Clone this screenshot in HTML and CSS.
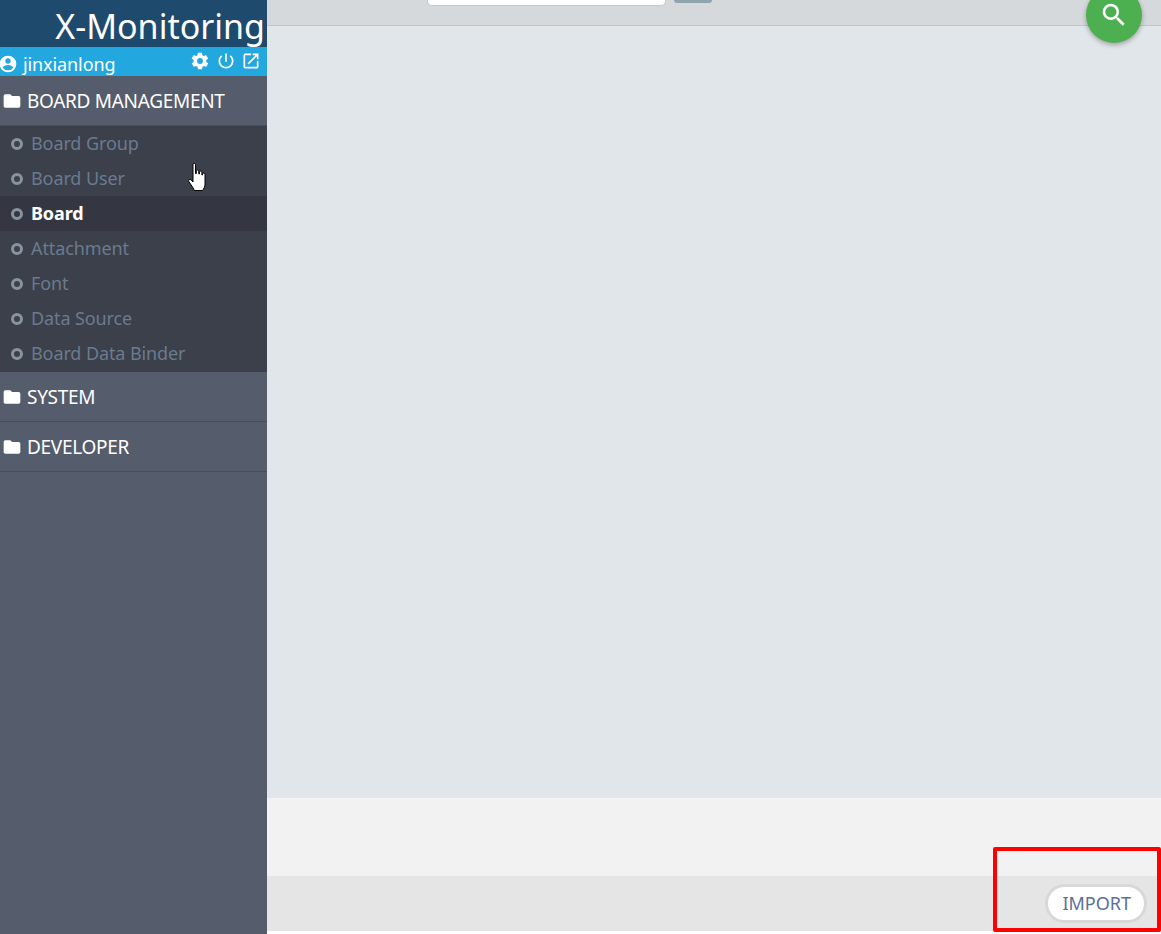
FILE: index.html
```html
<!DOCTYPE html>
<html lang="en">
<head>
<meta charset="UTF-8">
<title>X-Monitoring</title>
<link rel="stylesheet" href="styles.css">
</head>
<body>

<div class="app">
    <aside class="sidebar">
        <div class="logo">X-Monitoring</div>
        <div class="user-bar">
            <svg class="user-icon" viewBox="0 0 24 24"><path d="M12 2a10 10 0 1 0 0 20 10 10 0 0 0 0-20zm0 3.2a3.2 3.2 0 1 1 0 6.4 3.2 3.2 0 0 1 0-6.4zm0 14.4a7.6 7.6 0 0 1-6.2-3.2c.1-2 4.1-3.1 6.2-3.1s6.100 1.100 6.200 3.100a7.600 7.600 0 0 1-6.200 3.200z"/></svg>
            <span class="user-name">jinxianlong</span>
            <div class="user-actions">
                <svg class="action-icon" viewBox="0 0 24 24"><path d="M19.4 13c0-.3.1-.6.1-1s0-.7-.1-1l2.100-1.600c.2-.2.2-.4.1-.6l-2-3.500c-.1-.2-.4-.3-.6-.2l-2.500 1c-.5-.4-1.100-.7-1.700-1l-.4-2.600c0-.2-.2-.4-.5-.4h-4c-.2 0-.5.200-.5.400l-.4 2.600c-.6.300-1.100.6-1.700 1l-2.500-1c-.2-.1-.5 0-.6.200l-2 3.500c-.1.200-.1.500.1.600L4.500 11c0 .3-.1.700-.1 1s0 .7.1 1l-2.100 1.600c-.2.200-.2.400-.1.600l2 3.500c.1.200.4.300.6.200l2.500-1c.5.400 1.100.7 1.700 1l.4 2.600c0 .2.300.4.500.4h4c.3 0 .5-.2.500-.4l.4-2.600c.6-.3 1.200-.6 1.700-1l2.500 1c.2.100.5 0 .6-.2l2-3.500c.1-.2.100-.4-.1-.6L19.400 13zM12 15.500a3.500 3.500 0 1 1 0-7 3.500 3.500 0 0 1 0 7z"/></svg>
                <svg class="action-icon" viewBox="0 0 24 24"><path d="M13 3h-2v10h2V3zm4.800 2.200-1.400 1.400A7 7 0 1 1 7.600 6.600L6.200 5.200a9 9 0 1 0 11.600 0z"/></svg>
                <svg class="action-icon" viewBox="0 0 24 24"><path d="M19 19H5V5h7V3H5a2 2 0 0 0-2 2v14c0 1.100.9 2 2 2h14a2 2 0 0 0 2-2v-7h-2v7zM14 3v2h3.600l-9.800 9.800 1.400 1.400L19 6.400V10h2V3h-7z"/></svg>
            </div>
        </div>

        <div class="group-title">
            <svg class="folder-icon" viewBox="0 0 24 24"><path d="M10 4H4a2 2 0 0 0-2 2v12c0 1.100.9 2 2 2h16a2 2 0 0 0 2-2V8a2 2 0 0 0-2-2h-8l-2-2z"/></svg>
            <span>BOARD MANAGEMENT</span>
        </div>
        <ul class="group-items">
            <li class="group-item"><span class="ring"></span>Board Group</li>
            <li class="group-item"><span class="ring"></span>Board User</li>
            <li class="group-item group-item-active"><span class="ring"></span>Board</li>
            <li class="group-item"><span class="ring"></span>Attachment</li>
            <li class="group-item"><span class="ring"></span>Font</li>
            <li class="group-item"><span class="ring"></span>Data Source</li>
            <li class="group-item"><span class="ring"></span>Board Data Binder</li>
        </ul>
        <div class="group-title">
            <svg class="folder-icon" viewBox="0 0 24 24"><path d="M10 4H4a2 2 0 0 0-2 2v12c0 1.100.9 2 2 2h16a2 2 0 0 0 2-2V8a2 2 0 0 0-2-2h-8l-2-2z"/></svg>
            <span>SYSTEM</span>
        </div>
        <div class="group-title">
            <svg class="folder-icon" viewBox="0 0 24 24"><path d="M10 4H4a2 2 0 0 0-2 2v12c0 1.100.9 2 2 2h16a2 2 0 0 0 2-2V8a2 2 0 0 0-2-2h-8l-2-2z"/></svg>
            <span>DEVELOPER</span>
        </div>
    </aside>

    <main class="main">
        <div class="search-bar">
            <div class="search-input"></div>
            <div class="search-button"></div>
        </div>
        <div class="content"></div>
        <div class="band"></div>
        <div class="footer">
            <button class="import-button">IMPORT</button>
        </div>
        <div class="page-end"></div>
    </main>
</div>

<div class="fab">
    <svg class="fab-icon" viewBox="0 0 24 24"><path d="M15.500 14h-.8l-.3-.3a6.500 6.500 0 1 0-.7.7l.3.300v.8l5 5 1.500-1.500-5-5zm-6 0a4.500 4.500 0 1 1 0-9 4.500 4.500 0 0 1 0 9z"/></svg>
</div>

<svg class="hand-cursor" viewBox="0 0 19 28"><path d="M5 1.500c0-1.500 2.500-1.500 2.500 0v9h.8V8c0-1.200 2.500-1.200 2.500 0v3h.6V9c0-1.200 2.500-1.200 2.500 0v3h.6v-1c0-1.200 2.500-1.200 2.500 0v10c0 2.800-1 4.500-2.500 6.500H6.500L4.500 24 .8 18.500c-.8-1.500 1-2.800 2.200-1.700L5 19z" fill="#fff" stroke="#000" stroke-width="1"/></svg>

<div class="callout"></div>

</body>
</html>
```
FILE: styles.css
```css
html, body {
    height: 100%;
    margin: 0;
    padding: 0;
}

body {
    position: relative;
    overflow: hidden;
    font-family: "Noto Sans", "Open Sans", sans-serif;
    background-color: #fff;
}

.app {
    display: flex;
    height: 934px;
}

.sidebar {
    width: 267px;
    flex-shrink: 0;
    background-color: #555c6b;
    color: #fff;
}

.logo {
    height: 47px;
    padding-top: 6px;
    padding-right: 2px;
    box-sizing: border-box;
    background-color: #1e4a6d;
    font-size: 34px;
    line-height: 41px;
    text-align: right;
    white-space: nowrap;
}

.user-bar {
    display: flex;
    align-items: center;
    height: 29px;
    padding-top: 5px;
    box-sizing: border-box;
    background-color: #22a7df;
}

.user-icon {
    width: 20px;
    height: 20px;
    margin-left: -2px;
    fill: #fff;
}

.user-name {
    margin-left: 5px;
    font-size: 18px;
    letter-spacing: -0.1px;
}

.user-actions {
    display: flex;
    gap: 5px;
    margin-left: auto;
    margin-right: 6px;
    margin-top: -6px;
}

.action-icon {
    width: 20px;
    height: 20px;
    fill: #fff;
}

.action-icon:first-child {
    margin-right: 1px;
    margin-left: -1px;
}

.group-title {
    display: flex;
    align-items: center;
    height: 50px;
    box-sizing: border-box;
    border-bottom: 1px solid #474c5a;
    font-size: 19px;
    letter-spacing: -0.3px;
}

.folder-icon {
    width: 20px;
    height: 20px;
    margin-left: 2px;
    margin-right: 5px;
    fill: #fff;
}

.group-items {
    list-style-type: none;
    margin: 0;
    padding: 0;
    background-color: #3c404b;
    height: 246px;
}

.group-item {
    display: flex;
    align-items: center;
    height: 35px;
    padding-left: 11px;
    padding-bottom: 2px;
    box-sizing: border-box;
    font-size: 18px;
    letter-spacing: -0.1px;
    color: #6a7b8e;
}

.group-item-active {
    background-color: #343741;
    color: #fff;
    font-weight: 700;
}

.ring {
    width: 6px;
    height: 6px;
    margin-top: 2px;
    margin-right: 8px;
    border: 3px solid #87949f;
    border-radius: 50%;
}

.main {
    display: flex;
    flex-direction: column;
    flex: 1;
}

.search-bar {
    display: flex;
    align-items: flex-start;
    height: 26px;
    box-sizing: border-box;
    background-color: #d5d9dc;
    border-bottom: 1px solid #c0c5c8;
}

.search-input {
    width: 237px;
    height: 5px;
    margin-left: 160px;
    background-color: #fff;
    border: 1px solid #c4c8cb;
    border-top: 0;
    border-radius: 0 0 5px 5px;
}

.search-button {
    width: 38px;
    height: 3px;
    margin-left: 8px;
    background-color: #90a4ae;
    border-radius: 0 0 3px 3px;
}

.content {
    height: 772px;
    background-color: #e1e6ea;
}

.band {
    height: 78px;
    background-color: #f2f2f2;
}

.footer {
    display: flex;
    align-items: center;
    justify-content: flex-end;
    height: 55px;
    padding-right: 14px;
    box-sizing: border-box;
    background-color: #e5e5e5;
}

.page-end {
    flex: 1;
    background-color: #fff;
}

.import-button {
    height: 39px;
    padding: 0 13px 2px 14px;
    border: 3px solid #d8d8d8;
    border-radius: 20px;
    background-color: #fff;
    font-family: inherit;
    font-size: 18px;
    color: #5b6f9a;
}

.fab {
    position: absolute;
    top: -13px;
    left: 1086px;
    display: flex;
    align-items: center;
    justify-content: center;
    width: 56px;
    height: 56px;
    border-radius: 50%;
    background-color: #4caf50;
    box-shadow: 0 2px 5px rgba(0, 0, 0, 0.3);
}

.fab-icon {
    width: 30px;
    height: 30px;
    fill: #fff;
}

.hand-cursor {
    position: absolute;
    top: 163px;
    left: 188px;
    width: 19px;
    height: 28px;
}

.callout {
    position: absolute;
    top: 847px;
    left: 993px;
    width: 160px;
    height: 77px;
    border: 4px solid #f00;
    border-radius: 2px;
}
```
